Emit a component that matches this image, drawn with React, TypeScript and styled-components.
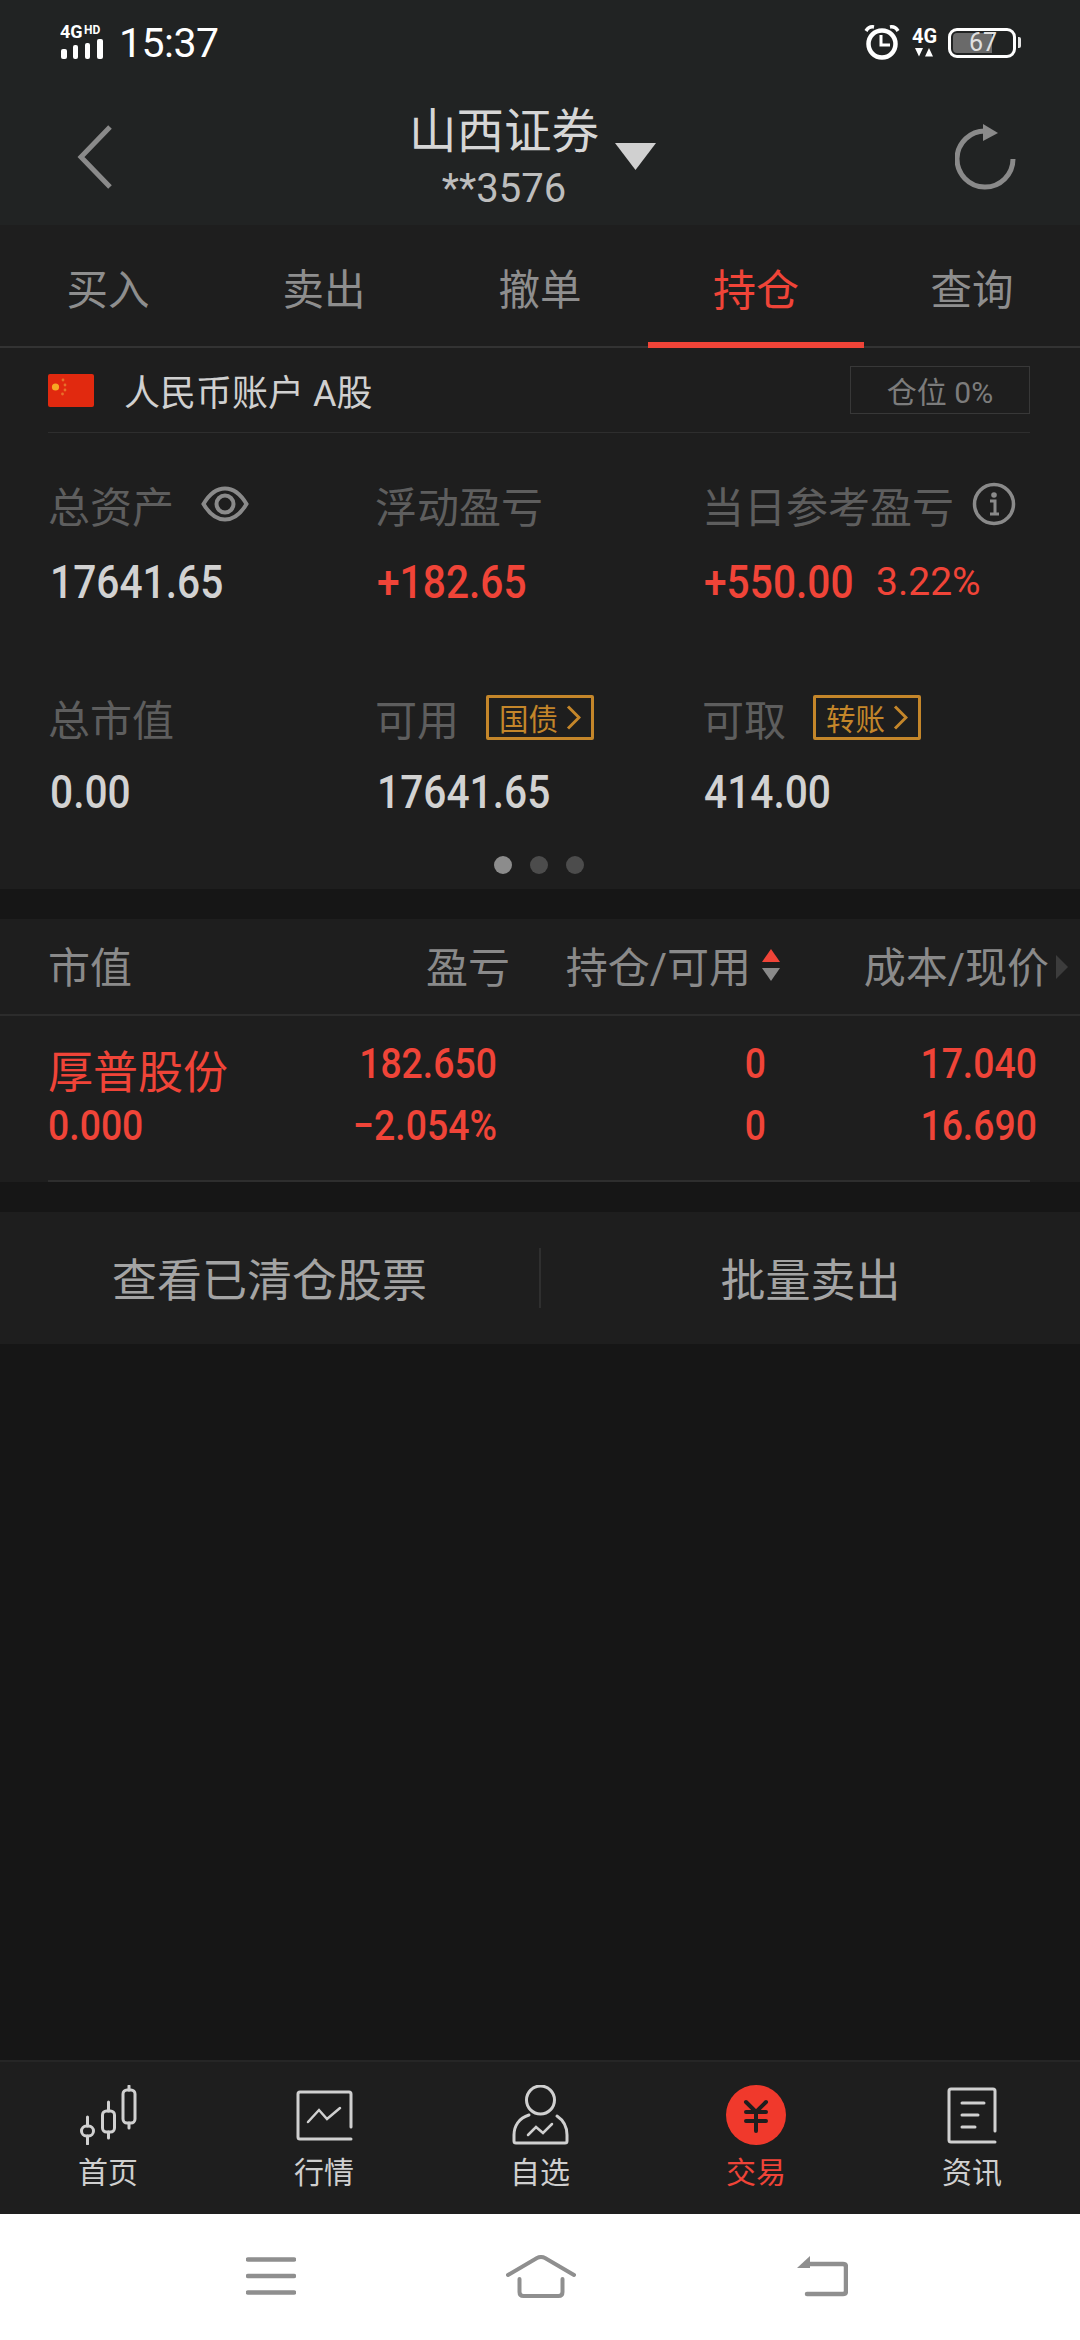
import React from "react";
import styled, { createGlobalStyle } from "styled-components";

const FONT = `Roboto, "Noto Sans CJK SC", sans-serif`;
const RED = "#f04438";

const Global = createGlobalStyle`
  html, body { margin: 0; padding: 0; background: #161616; }
  * { box-sizing: border-box; }
  body { font-family: ${FONT}; }
`;

const Page = styled.div`
  width: 1080px;
  height: 2340px;
  display: flex;
  flex-direction: column;
  background: #161616;
  overflow: hidden;
`;
const Header = styled.header`
  height: 225px;
  background: #212323;
  display: flex;
  flex-direction: column;
`;
const StatusBar = styled.div`
  height: 80px;
  padding: 6px 64px 0 60px;
  display: flex;
  justify-content: space-between;
  align-items: center;
  color: #fff;
`;
const StatusGroup = styled.div<{ $gap: number }>`
  display: flex;
  align-items: center;
  gap: ${(p) => p.$gap}px;
`;
const Clock = styled.span`
  font-size: 41px;
  font-weight: 400;
  letter-spacing: -0.5px;
`;
const NavBar = styled.div`
  flex: 1;
  display: flex;
  justify-content: space-between;
  align-items: center;
  padding: 8px 63px 0 77px;
`;
const NavTitle = styled.div`
  display: flex;
  flex-direction: column;
  align-items: center;
  padding-top: 5px;
  margin-right: 59px;
  color: #d6d6d6;
`;
const Broker = styled.div`
  font-size: 47.5px;
  line-height: 50px;
  position: relative;
`;
const Caret = styled.svg`
  position: absolute;
  left: 206px;
  top: 36px;
`;
const Account = styled.div`
  margin-top: 10px;
  font-size: 40px;
  line-height: 44px;
  color: #bdbdbd;
`;
const Tabs = styled.nav`
  height: 123px;
  background: #1e1e1e;
  display: flex;
  border-bottom: 2px solid #333;
`;
const Tab = styled.div<{ $on?: boolean }>`
  width: 216px;
  display: flex;
  align-items: center;
  justify-content: center;
  font-size: ${(p) => (p.$on ? 43 : 41.5)}px;
  padding-top: 2px;
  color: ${(p) => (p.$on ? RED : "#8e8e8e")};
  position: relative;
  &::after {
    content: "";
    display: ${(p) => (p.$on ? "block" : "none")};
    position: absolute;
    left: 0;
    right: 0;
    bottom: -2px;
    height: 6px;
    background: ${RED};
  }
`;
const Summary = styled.section`
  background: #1e1e1e;
  height: 541px;
  padding: 0 50px 0 48px;
  display: flex;
  flex-direction: column;
`;
const AccountRow = styled.div`
  height: 85px;
  border-bottom: 1px solid #2e2e2e;
  display: flex;
  align-items: center;
  gap: 30px;
  font-size: 36px;
  color: #d0d0d0;
`;
const PositionBox = styled.div`
  margin-left: auto;
  width: 180px;
  height: 48px;
  border: 1px solid #383838;
  display: flex;
  align-items: center;
  justify-content: center;
  font-size: 30px;
  color: #7c7c7c;
`;
const Grid = styled.div`
  display: grid;
  grid-template-columns: 327px 327px 1fr;
`;
const Cell = styled.div<{ $h: number; $top?: number }>`
  height: ${(p) => p.$h}px;
  padding-top: ${(p) => p.$top ?? 0}px;
  display: flex;
  flex-direction: column;
`;
const LabelRow = styled.div<{ $gap?: number }>`
  height: 60px;
  display: flex;
  align-items: center;
  font-size: 42px;
  color: #5e5e5e;
  gap: ${(p) => p.$gap ?? 27}px;
`;
const Value = styled.div<{ $red?: boolean; $m: number }>`
  height: 60px;
  margin-top: ${(p) => p.$m}px;
  padding-left: 2px;
  display: flex;
  align-items: center;
  font-size: 46px;
  font-weight: 500;
  color: ${(p) => (p.$red ? RED : "#d2d2d2")};
`;
const ValueText = styled.span`
  display: inline-block;
  transform: scaleX(0.885);
  transform-origin: left center;
`;
const Percent = styled.span`
  margin-left: 3px;
  font-size: 39px;
  font-weight: 400;
`;
const GoldTag = styled.span`
  width: 108px;
  height: 45px;
  border: 3px solid #c4862a;
  border-radius: 2px;
  display: flex;
  align-items: center;
  justify-content: center;
  gap: 8px;
  color: #c4862a;
  font-size: 29.5px;
`;
const Dots = styled.div`
  display: flex;
  justify-content: center;
  gap: 18px;
  margin-top: 6px;
`;
const Dot = styled.span<{ $on?: boolean }>`
  width: 18px;
  height: 18px;
  border-radius: 50%;
  background: ${(p) => (p.$on ? "#8c8c8c" : "#4c4c4c")};
`;
const Holdings = styled.section`
  margin-top: 30px;
  background: #1e1e1e;
  height: 263px;
`;
const TableHead = styled.div`
  height: 97px;
  border-bottom: 2px solid #2c2c2c;
  position: relative;
  display: grid;
  grid-template-columns: 250px 212px 270px 269px;
  padding: 0 0 4px 48px;
  align-items: center;
  font-size: 42px;
  color: #8a8a8a;
`;
const HeadCell = styled.div`
  justify-self: end;
  display: flex;
  align-items: center;
  white-space: nowrap;
  &:first-child { justify-self: start; }
`;
const SortIcon = styled.svg`
  margin-left: 11px;
`;
const MoreIcon = styled.svg`
  position: absolute;
  right: 12px;
  top: 36px;
`;
const TableRow = styled.div`
  height: 164px;
  display: grid;
  grid-template-columns: 200px 249px 269px 271px;
  padding: 17px 0 0 48px;
  grid-template-rows: 62px 61px;
  align-content: start;
  color: ${RED};
`;
const Name = styled.div`
  font-size: 45px;
  line-height: 62px;
  padding-top: 10px;
  white-space: nowrap;
`;
const Num = styled.div<{ $end?: boolean }>`
  font-size: 42px;
  line-height: 62px;
  font-weight: 500;
  text-align: ${(p) => (p.$end ? "right" : "left")};
  transform: scaleX(0.89);
  transform-origin: ${(p) => (p.$end ? "right" : "left")} center;
  white-space: nowrap;
`;
const RowLine = styled.div`
  height: 2px;
  margin: 0 50px 0 48px;
  background: #2e2e2e;
`;
const Actions = styled.section`
  margin-top: 30px;
  height: 132px;
  background: #1e1e1e;
  display: flex;
  align-items: center;
`;
const Action = styled.div`
  flex: 1;
  height: 60px;
  padding-bottom: 2px;
  display: flex;
  align-items: center;
  justify-content: center;
  font-size: 45px;
  color: #a4a4a4;
  & + & { border-left: 2px solid #2f2f2f; }
`;
const Spacer = styled.div`
  flex: 1;
`;
const TabBar = styled.nav`
  height: 154px;
  background: #1e1e1e;
  border-top: 2px solid #262626;
  display: flex;
  padding-top: 23px;
`;
const TabItem = styled.div<{ $on?: boolean }>`
  width: 216px;
  display: flex;
  flex-direction: column;
  align-items: center;
  font-size: 30px;
  line-height: 36px;
  color: ${(p) => (p.$on ? RED : "#cfcfcf")};
`;
const TabIconBox = styled.div`
  height: 60px;
  margin-bottom: 10px;
  display: flex;
  align-items: center;
`;
const SystemBar = styled.div`
  height: 126px;
  background: #fff;
  display: flex;
  gap: 210px;
  padding: 0 0 2px 246px;
  align-items: center;
`;
const SignalSvg = styled.svg`
  margin-top: -10px;
`;
const NetSvg = styled.svg`
  margin-top: -8px;
`;

const Signal = () => (
  <SignalSvg width="46" height="42" viewBox="0 -8 46 42" fill="#fff">
    <text x="0" y="13" fontSize="18" fontWeight="700" fontFamily="Roboto">4G</text>
    <text x="24" y="9" fontSize="12" fontWeight="700" fontFamily="Roboto">HD</text>
    <rect x="1" y="24" width="6" height="10" rx="2" />
    <rect x="13" y="20" width="5" height="14" rx="2" />
    <rect x="25" y="18" width="5" height="16" rx="2" />
    <rect x="37" y="14" width="6" height="20" rx="2" />
  </SignalSvg>
);
const Alarm = () => (
  <svg width="36" height="36" viewBox="0 0 36 36" fill="none" stroke="#fff">
    <circle cx="18" cy="19" r="13.5" strokeWidth="4.5" />
    <path d="M17 10v10h9" strokeWidth="3" />
    <path d="M2 6Q5 1 10 2M34 6Q31 1 26 2" strokeWidth="3.5" />
  </svg>
);
const Net = () => (
  <NetSvg width="26" height="38" viewBox="0 -8 26 38" fill="#fff">
    <text x="0" y="15" fontSize="20" fontWeight="700" fontFamily="Roboto">4G</text>
    <path d="M3 20h8l-4 8.5zM13 28.5h8l-4-8.5z" />
  </NetSvg>
);
const BatteryShell = styled.div`
  width: 68px;
  height: 30px;
  position: relative;
  margin-left: -2px;
  border: 3.5px solid #fff;
  border-radius: 9px;
  color: #e0e0e0;
  font-size: 25px;
  line-height: 23px;
  text-align: center;
  &::before {
    content: "";
    position: absolute;
    left: 2px;
    top: 2px;
    bottom: 2px;
    width: 39px;
    background: #6a6a6a;
    border-radius: 4px 0 0 4px;
  }
  &::after {
    content: "";
    position: absolute;
    right: -8px;
    top: 6px;
    width: 3px;
    height: 11px;
    background: #e4e4e4;
    border-radius: 0 2px 2px 0;
  }
`;
const BatteryNum = styled.span`
  position: relative;
  margin-left: 2px;
`;
const Flag = () => (
  <svg width="46" height="33" viewBox="0 0 46 33">
    <rect width="46" height="33" rx="2" fill="#e1290f" />
    <circle cx="7.5" cy="13" r="3.6" fill="#f7a823" />
    <circle cx="15" cy="6" r="1.4" fill="#e8702a" />
    <circle cx="17" cy="11" r="1.4" fill="#e8702a" />
    <circle cx="17" cy="16" r="1.4" fill="#e8702a" />
    <circle cx="14.5" cy="20" r="1.4" fill="#e8702a" />
  </svg>
);
const Eye = () => (
  <svg width="48" height="36" viewBox="0 0 48 36" fill="none" stroke="#8a8a8a" strokeWidth="4">
    <path d="M2.5 18C9 7 16 2.5 24 2.5S39 7 45.5 18C39 29 32 33.5 24 33.5S9 29 2.5 18Z" />
    <circle cx="24" cy="18" r="8.5" />
  </svg>
);
const Info = () => (
  <svg width="44" height="44" viewBox="0 0 44 44" fill="none" stroke="#8a8a8a">
    <circle cx="22" cy="22" r="19.5" strokeWidth="3.5" />
    <circle cx="22" cy="13" r="2.8" fill="#8a8a8a" stroke="none" />
    <path d="M18 19h5v13M18 32h9" strokeWidth="3" />
  </svg>
);
const Chevron = () => (
  <svg width="15" height="25" viewBox="0 0 15 25" fill="none" stroke="#c4862a" strokeWidth="3">
    <path d="M2 1.5l11 11L2 23.5" />
  </svg>
);
const Stock = () => (
  <svg width="57" height="60" viewBox="0 0 57 60" fill="none" stroke="#d0d0d0" strokeWidth="3" strokeLinecap="round">
    <rect x="1.5" y="41" width="12" height="10" rx="5" />
    <path d="M7.5 32v9M7.5 51v8" />
    <rect x="22.5" y="26" width="12" height="21" rx="4" />
    <path d="M28.5 17v9M28.5 47v6" />
    <rect x="43" y="5" width="12" height="33" rx="4" />
    <path d="M49 1v4M49 38v5" />
  </svg>
);
const Market = () => (
  <svg width="57" height="51" viewBox="0 0 57 51" fill="none" stroke="#d0d0d0" strokeWidth="3" strokeLinecap="round">
    <path d="M55 37V4q0-2-2-2H4q-2 0-2 2v43q0 2 2 2h51" />
    <path d="M12 32l11-12 8 9 13-11" strokeWidth="2.5" />
  </svg>
);
const Person = () => (
  <svg width="57" height="60" viewBox="0 0 57 60" fill="none" stroke="#d0d0d0" strokeWidth="3" strokeLinecap="round">
    <circle cx="28.5" cy="15" r="14" />
    <path d="M17 30C7 33 2 41 2 50v6q0 2 2 2h49q2 0 2-2v-6c0-8-4-15-10-19" />
    <path d="M16 50l8-8 7 6 9-9" strokeWidth="2.5" />
  </svg>
);
const Trade = () => (
  <svg width="60" height="60" viewBox="0 0 60 60">
    <circle cx="30" cy="30" r="30" fill="#f0392c" />
    <path d="M20 17l10 10 10-10M20 27h20M20 36h20M30 27v19" fill="none" stroke="#1e1e1e" strokeWidth="4" strokeLinecap="round" />
  </svg>
);
const News = () => (
  <svg width="50" height="57" viewBox="0 0 50 57" fill="none" stroke="#d0d0d0" strokeWidth="3" strokeLinecap="round">
    <path d="M48 44V4q0-2-2-2H4q-2 0-2 2v49q0 2 2 2h44" />
    <path d="M15 16h22M15 28h16M15 40h13" />
  </svg>
);
const Menu = () => (
  <svg width="50" height="38" viewBox="0 0 50 38" fill="none" stroke="#8f8f8f" strokeWidth="4.5" strokeLinecap="round">
    <path d="M2 2.5h46M2 19h46M2 35.5h46" />
  </svg>
);
const Home = () => (
  <svg width="70" height="43" viewBox="0 0 70 43" fill="none" stroke="#8f8f8f" strokeWidth="4" strokeLinecap="round">
    <path d="M2 20 31 3q4-2 8 0l29 17" />
    <path d="M13.5 24v13q0 4 4 4h35q4 0 4-4V24" />
  </svg>
);
const Back = () => (
  <svg width="62" height="41" viewBox="-11 0 62 41">
    <path d="M12 8h34q3 0 3 3v24q0 3-3 3H10" fill="none" stroke="#8f8f8f" strokeWidth="4.5" strokeLinecap="round" />
    <path d="M0 12 13 0v12z" fill="#8f8f8f" />
  </svg>
);

const tabs = ["买入", "卖出", "撤单", "持仓", "查询"];
const nav: [string, React.ReactNode, boolean?][] = [
  ["首页", <Stock />],
  ["行情", <Market />],
  ["自选", <Person />],
  ["交易", <Trade />, true],
  ["资讯", <News />],
];

export default function App() {
  return (
    <Page>
      <Global />
      <Header>
        <StatusBar>
          <StatusGroup $gap={13}>
            <Signal />
            <Clock>15:37</Clock>
          </StatusGroup>
          <StatusGroup $gap={12}>
            <Alarm />
            <Net />
            <BatteryShell><BatteryNum>67</BatteryNum></BatteryShell>
          </StatusGroup>
        </StatusBar>
        <NavBar>
          <svg width="35" height="64" viewBox="0 0 35 64" fill="none" stroke="#8a8a8a" strokeWidth="5">
            <path d="M33 2 4 32l29 30" />
          </svg>
          <NavTitle>
            <Broker>
              山西证券
              <Caret width="41" height="27" viewBox="0 0 41 27"><path d="M0 0h41L20.5 27z" fill="#d0d0d0" /></Caret>
            </Broker>
            <Account>**3576</Account>
          </NavTitle>
          <svg width="62" height="66" viewBox="0 0 62 66" fill="none" stroke="#8a8a8a" strokeWidth="5">
            <path d="M58 35a28 28 0 1 1-27-28" />
            <path d="M28 0l15 9-15 8z" fill="#8a8a8a" stroke="none" />
          </svg>
        </NavBar>
      </Header>
      <Tabs>
        {tabs.map((t) => (
          <Tab key={t} $on={t === "持仓"}>{t}</Tab>
        ))}
      </Tabs>
      <Summary>
        <AccountRow>
          <Flag />
          人民币账户 A股
          <PositionBox>仓位 0%</PositionBox>
        </AccountRow>
        <Grid>
          <Cell $h={254} $top={41}>
            <LabelRow>总资产 <Eye /></LabelRow>
            <Value $m={18}><ValueText>17641.65</ValueText></Value>
          </Cell>
          <Cell $h={254} $top={41}>
            <LabelRow>浮动盈亏</LabelRow>
            <Value $red $m={18}><ValueText>+182.65</ValueText></Value>
          </Cell>
          <Cell $h={254} $top={41}>
            <LabelRow $gap={18}>当日参考盈亏 <Info /></LabelRow>
            <Value $red $m={18}><ValueText>+550.00</ValueText><Percent>3.22%</Percent></Value>
          </Cell>
          <Cell $h={163}>
            <LabelRow>总市值</LabelRow>
            <Value $m={15}><ValueText>0.00</ValueText></Value>
          </Cell>
          <Cell $h={163}>
            <LabelRow>可用 <GoldTag>国债<Chevron /></GoldTag></LabelRow>
            <Value $m={15}><ValueText>17641.65</ValueText></Value>
          </Cell>
          <Cell $h={163}>
            <LabelRow>可取 <GoldTag>转账<Chevron /></GoldTag></LabelRow>
            <Value $m={15}><ValueText>414.00</ValueText></Value>
          </Cell>
        </Grid>
        <Dots>
          <Dot $on />
          <Dot />
          <Dot />
        </Dots>
      </Summary>
      <Holdings>
        <TableHead>
          <HeadCell>市值</HeadCell>
          <HeadCell>盈亏</HeadCell>
          <HeadCell>
            持仓/可用
            <SortIcon width="18" height="32" viewBox="0 0 18 32">
              <path d="M9 0l9 13H0z" fill={RED} />
              <path d="M0 19h18L9 32z" fill="#8a8a8a" />
            </SortIcon>
          </HeadCell>
          <HeadCell>成本/现价</HeadCell>
          <MoreIcon width="12" height="24" viewBox="0 0 12 24"><path d="M0 0l12 12L0 24z" fill="#3c3c3c" /></MoreIcon>
        </TableHead>
        <TableRow>
          <Name>厚普股份</Name>
          <Num $end>182.650</Num>
          <Num $end>0</Num>
          <Num $end>17.040</Num>
          <Num>0.000</Num>
          <Num $end>−2.054%</Num>
          <Num $end>0</Num>
          <Num $end>16.690</Num>
        </TableRow>
        <RowLine />
      </Holdings>
      <Actions>
        <Action>查看已清仓股票</Action>
        <Action>批量卖出</Action>
      </Actions>
      <Spacer />
      <TabBar>
        {nav.map(([label, icon, on]) => (
          <TabItem key={label} $on={on}>
            <TabIconBox>{icon}</TabIconBox>
            {label}
          </TabItem>
        ))}
      </TabBar>
      <SystemBar>
        <Menu />
        <Home />
        <Back />
      </SystemBar>
    </Page>
  );
}
